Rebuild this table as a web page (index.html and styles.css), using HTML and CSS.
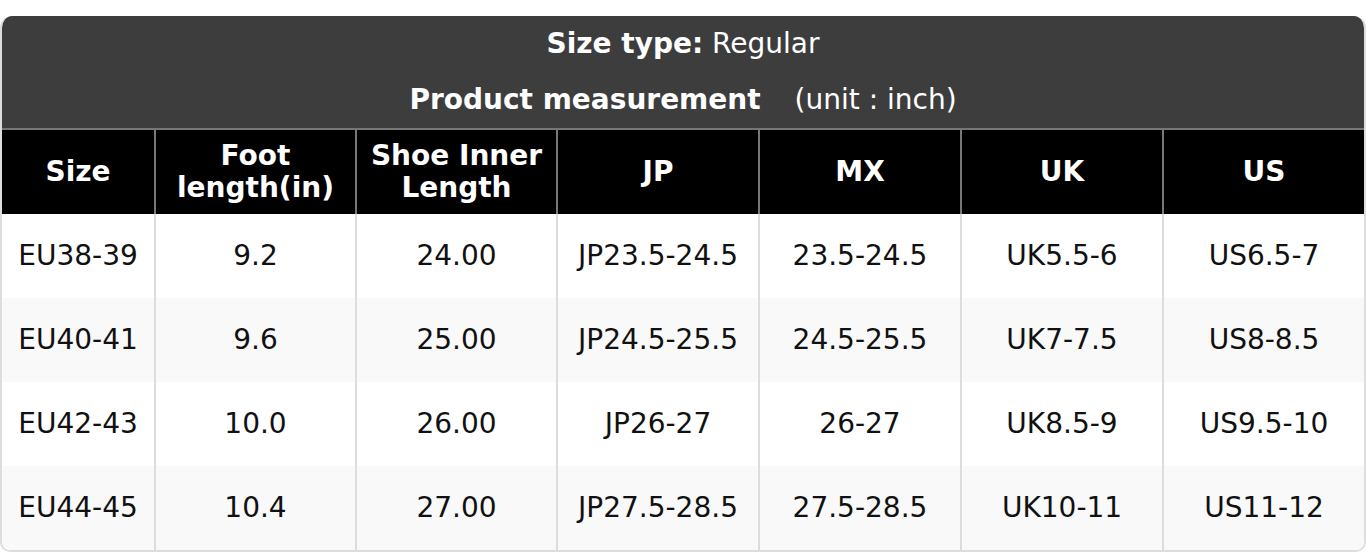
FILE: index.html
```html
<!DOCTYPE html>
<html lang="en">
<head>
<meta charset="utf-8">
<title>Size chart</title>
<link rel="stylesheet" href="styles.css">
</head>
<body>
<div class="chart">
  <div class="caption">
    <div class="caption-line"><b>Size type:</b> Regular</div>
    <div class="caption-line"><b>Product measurement</b><span class="unit">(unit : inch)</span></div>
  </div>
  <table class="sizes">
    <colgroup>
      <col class="c1"><col class="c2"><col class="c3"><col class="c4"><col class="c5"><col class="c6"><col class="c7">
    </colgroup>
    <thead>
      <tr>
        <th>Size</th>
        <th>Foot<br>length(in)</th>
        <th>Shoe Inner<br>Length</th>
        <th>JP</th>
        <th>MX</th>
        <th>UK</th>
        <th>US</th>
      </tr>
    </thead>
    <tbody>
      <tr>
        <td>EU38-39</td><td>9.2</td><td>24.00</td><td>JP23.5-24.5</td><td>23.5-24.5</td><td>UK5.5-6</td><td>US6.5-7</td>
      </tr>
      <tr>
        <td>EU40-41</td><td>9.6</td><td>25.00</td><td>JP24.5-25.5</td><td>24.5-25.5</td><td>UK7-7.5</td><td>US8-8.5</td>
      </tr>
      <tr>
        <td>EU42-43</td><td>10.0</td><td>26.00</td><td>JP26-27</td><td>26-27</td><td>UK8.5-9</td><td>US9.5-10</td>
      </tr>
      <tr>
        <td>EU44-45</td><td>10.4</td><td>27.00</td><td>JP27.5-28.5</td><td>27.5-28.5</td><td>UK10-11</td><td>US11-12</td>
      </tr>
    </tbody>
  </table>
</div>
</body>
</html>
```

FILE: styles.css
```css
html, body {
  margin: 0;
  padding: 0;
  background: #ffffff;
}

body {
  font-family: "DejaVu Sans", "Noto Sans", sans-serif;
  font-size: 28px;
  color: #111111;
  padding-top: 16px;
}

.chart {
  width: 1366px;
  box-sizing: border-box;
  border-radius: 12px 12px 10px 10px;
  overflow: hidden;
  border-left: 2px solid #dddddd;
  border-right: 2px solid #dddddd;
  border-bottom: 2px solid #dddddd;
}

.caption {
  background: #3d3d3d;
  color: #ffffff;
  text-align: center;
  margin: 0 -2px;
}

.caption-line {
  height: 56px;
  line-height: 56px;
}

.caption-line b {
  font-weight: bold;
}

.unit {
  margin-left: 34px;
}

.sizes {
  width: 100%;
  table-layout: fixed;
  border-spacing: 0;
  border-collapse: separate;
}

.c1 { width: 152px; }
.c2 { width: 201px; }
.c3 { width: 201px; }
.c4 { width: 202px; }
.c5 { width: 202px; }
.c6 { width: 202px; }
.c7 { width: 202px; }

.sizes th {
  background: #000000;
  color: #ffffff;
  font-weight: bold;
  line-height: 32px;
  height: 86px;
  box-sizing: border-box;
  padding: 0;
  text-align: center;
  vertical-align: middle;
  border-top: 2px solid #777777;
  border-left: 2px solid #777777;
}

.sizes th:first-child {
  border-left: none;
}

.sizes td {
  height: 84px;
  box-sizing: border-box;
  padding: 0;
  text-align: center;
  vertical-align: middle;
  line-height: 32px;
  border-left: 2px solid #dddddd;
  background: #ffffff;
}

.sizes td:first-child {
  border-left: none;
}

.sizes tbody tr:nth-child(even) td {
  background: #f9f9f9;
}
```
